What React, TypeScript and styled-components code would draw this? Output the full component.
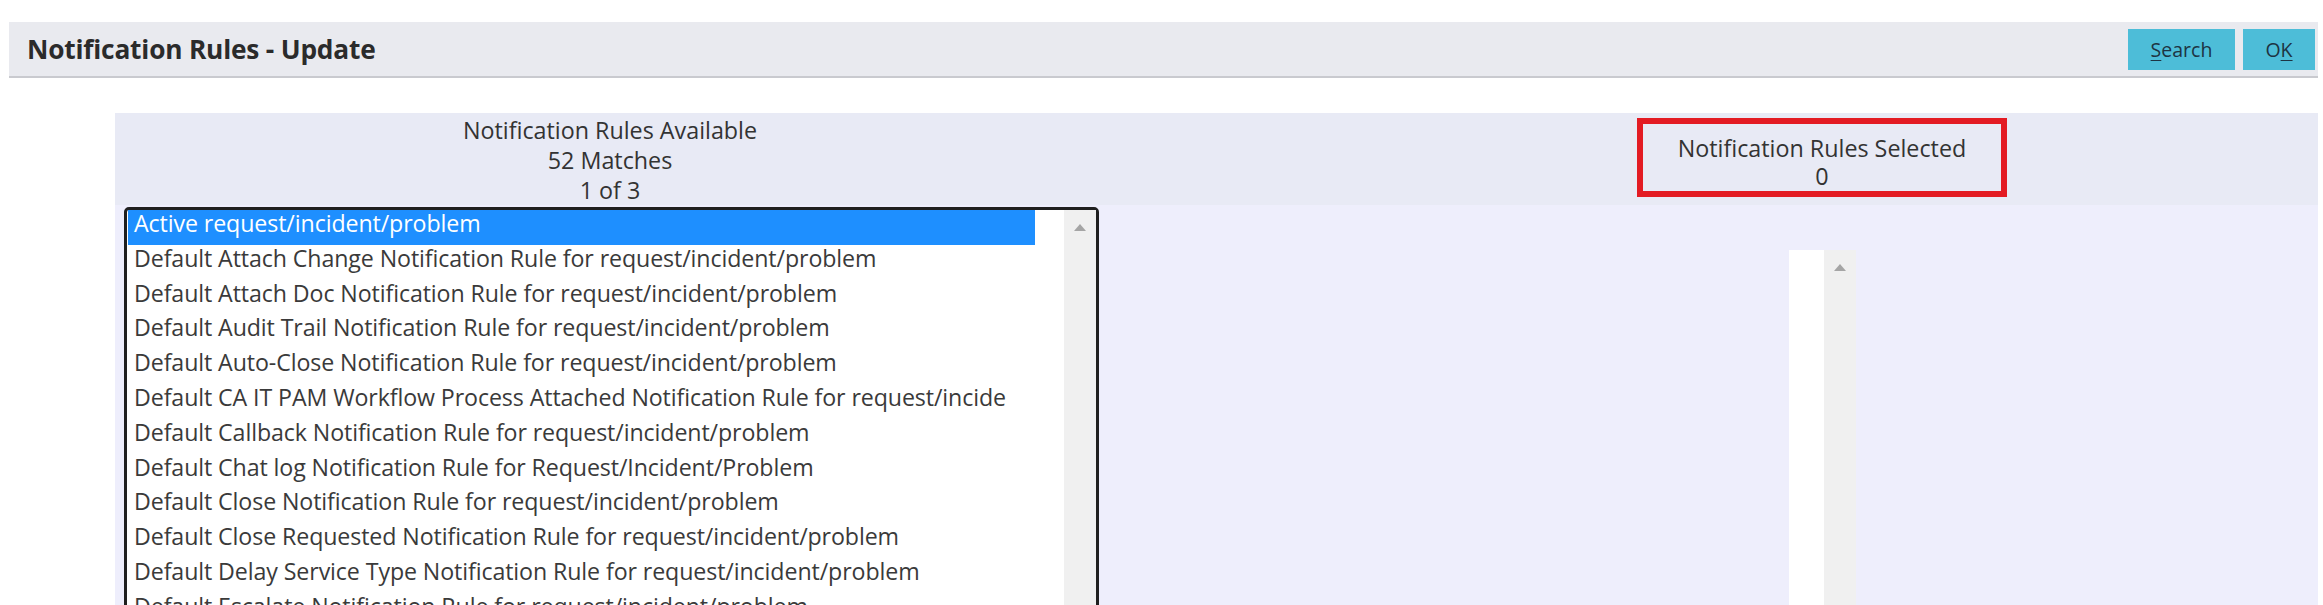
import { createGlobalStyle, styled } from "styled-components";

const GlobalStyle = createGlobalStyle`
  html, body {
    margin: 0;
    padding: 0;
    overflow: hidden;
    background: #ffffff;
    font-family: "Open Sans", "Noto Sans", sans-serif;
    color: #333;
  }
`;

const Page = styled.div`
  padding: 22px 5px 0 9px;
`;

const TitleBar = styled.div`
  height: 54px;
  display: flex;
  align-items: center;
  justify-content: space-between;
  padding: 0 3px 0 18px;
  background: #e9eaef;
  border-bottom: 2px solid #c9cacf;
`;

const Title = styled.h1`
  margin: 0;
  font-size: 26.3px;
  font-weight: 700;
  letter-spacing: -0.2px;
  color: #2b2b2b;
`;

const Actions = styled.div`
  display: flex;
  gap: 8px;
`;

const ActionBtn = styled.button<{ $w: number }>`
  width: ${(p) => p.$w}px;
  height: 41px;
  border: 0;
  background: #4dbdd8;
  color: #1d3443;
  font-family: "Open Sans", "Noto Sans", sans-serif;
  font-size: 19.5px;
  padding: 0;
  cursor: pointer;

  u {
    text-underline-offset: 3px;
  }
`;

const Panel = styled.div`
  margin: 35px 0 0 106px;
  display: grid;
  grid-template-columns: 990px 221px 1fr;
  grid-template-rows: 92px auto;
  background: #eeeefc;
  min-height: 600px;
`;

const HeadCell = styled.div`
  background: #e8eaf5;
  display: flex;
  flex-direction: column;
  align-items: center;
  font-size: 23.3px;
  line-height: 30px;
  color: #333;
  padding-top: 2px;
`;

const SelectedBox = styled.div`
  margin-top: 3px;
  width: 358px;
  height: 58px;
  border: 6px solid #e31b23;
  display: flex;
  flex-direction: column;
  align-items: center;
  justify-content: center;
  line-height: 28px;
  padding-top: 9px;
  box-sizing: content-box;
`;

const BodyCell = styled.div<{ $center?: boolean }>`
  display: flex;
  justify-content: ${(p) => (p.$center ? "center" : "flex-start")};
  padding: ${(p) => (p.$center ? "45px 0 0" : "2px 0 0 9px")};
`;

const ListBox = styled.div`
  width: 969px;
  height: 520px;
  border: 3px solid #1f1f1f;
  border-radius: 5px;
  background: #fff;
  display: flex;
`;

const Options = styled.div`
  flex: 1;
  padding-left: 1px;
`;

const Option = styled.div<{ $selected?: boolean }>`
  width: 901px;
  height: 34.8px;
  line-height: 27px;
  padding-left: 6px;
  font-size: 23.2px;
  letter-spacing: -0.1px;
  white-space: nowrap;
  color: ${(p) => (p.$selected ? "#fff" : "#3a3a3a")};
  background: ${(p) => (p.$selected ? "#1e8fff" : "transparent")};
`;

const Track = styled.div`
  width: 32px;
  background: #f0f0f0;
  display: flex;
  justify-content: center;
  padding-top: 14px;
  box-sizing: border-box;
`;

const UpArrow = styled.div`
  width: 0;
  height: 0;
  border-left: 6px solid transparent;
  border-right: 6px solid transparent;
  border-bottom: 7px solid #a5a5a5;
`;

const EmptyList = styled.div`
  display: flex;
  height: 400px;
`;

const EmptyArea = styled.div`
  width: 35px;
  background: #fff;
`;

const rules = [
  "Active request/incident/problem",
  "Default Attach Change Notification Rule for request/incident/problem",
  "Default Attach Doc Notification Rule for request/incident/problem",
  "Default Audit Trail Notification Rule for request/incident/problem",
  "Default Auto-Close Notification Rule for request/incident/problem",
  "Default CA IT PAM Workflow Process Attached Notification Rule for request/incide",
  "Default Callback Notification Rule for request/incident/problem",
  "Default Chat log Notification Rule for Request/Incident/Problem",
  "Default Close Notification Rule for request/incident/problem",
  "Default Close Requested Notification Rule for request/incident/problem",
  "Default Delay Service Type Notification Rule for request/incident/problem",
  "Default Escalate Notification Rule for request/incident/problem",
  "Default Event Notification Rule for request/incident/problem",
  "Default Field Change Notification Rule for request/incident/problem",
];

export default function App() {
  return (
    <>
      <GlobalStyle />
      <Page>
        <TitleBar>
          <Title>Notification Rules - Update</Title>
          <Actions>
            <ActionBtn $w={107}>
              <u>S</u>earch
            </ActionBtn>
            <ActionBtn $w={72}>
              O<u>K</u>
            </ActionBtn>
          </Actions>
        </TitleBar>

        <Panel>
          <HeadCell>
            <span>Notification Rules Available</span>
            <span>52 Matches</span>
            <span>1 of 3</span>
          </HeadCell>
          <HeadCell />
          <HeadCell>
            <SelectedBox>
              <span>Notification Rules Selected</span>
              <span>0</span>
            </SelectedBox>
          </HeadCell>

          <BodyCell>
            <ListBox>
              <Options>
                {rules.map((r, i) => (
                  <Option key={r} $selected={i === 0}>
                    {r}
                  </Option>
                ))}
              </Options>
              <Track>
                <UpArrow />
              </Track>
            </ListBox>
          </BodyCell>
          <BodyCell />
          <BodyCell $center>
            <EmptyList>
              <EmptyArea />
              <Track>
                <UpArrow />
              </Track>
            </EmptyList>
          </BodyCell>
        </Panel>
      </Page>
    </>
  );
}
